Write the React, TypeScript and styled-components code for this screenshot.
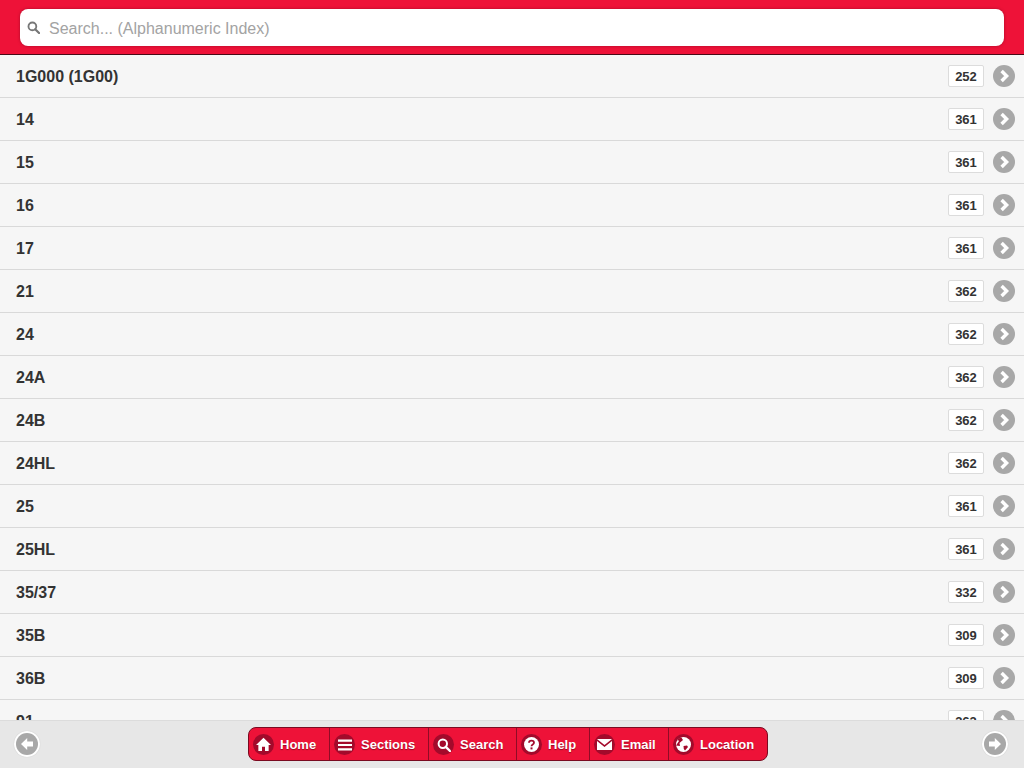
import styled, { createGlobalStyle } from 'styled-components';

const GlobalStyle = createGlobalStyle`
  html, body {
    margin: 0;
    height: 100%;
    overflow: hidden;
    font-family: "Liberation Sans", Arial, sans-serif;
  }
  #root {
    height: 100%;
  }
`;

const Page = styled.div`
  display: flex;
  flex-direction: column;
  height: 768px;
  background: #f6f6f6;
`;

const Header = styled.header`
  flex: none;
  box-sizing: border-box;
  height: 55px;
  padding: 9px 20px 8px;
  background: #ee1238;
  border-bottom: 1px solid #4a0a16;
`;

const SearchBox = styled.label`
  display: flex;
  align-items: center;
  gap: 9px;
  box-sizing: border-box;
  height: 37px;
  padding: 0 7px;
  background: #fff;
  border-radius: 8px;
  box-shadow: 0 0 3px rgba(120, 0, 30, 0.6);
`;

const SearchInput = styled.input`
  flex: 1;
  border: 0;
  outline: 0;
  padding: 2px 0 0;
  background: transparent;
  font: 16px "Liberation Sans", Arial, sans-serif;
  color: #333;

  &::placeholder {
    color: #a3a3a3;
    opacity: 1;
  }
`;

const List = styled.ul`
  flex: 1;
  min-height: 0;
  margin: 0;
  padding: 0;
  overflow: hidden;
  list-style: none;
`;

const Row = styled.li`
  display: flex;
  align-items: center;
  box-sizing: border-box;
  height: 43px;
  padding: 0 9px 1px 16px;
  border-bottom: 1px solid #d9d9d9;
  background: #f6f6f6;
`;

const RowLabel = styled.span`
  flex: 1;
  margin-top: 2px;
  font-size: 16px;
  font-weight: 700;
  color: #333;
`;

const Count = styled.span`
  box-sizing: border-box;
  width: 36px;
  height: 22px;
  margin-right: 9px;
  border: 1px solid #dcdcdc;
  border-radius: 2px;
  background: #fff;
  font-size: 13px;
  font-weight: 700;
  line-height: 21px;
  text-align: center;
  color: #333;
`;

const Footer = styled.footer`
  flex: none;
  display: flex;
  align-items: center;
  justify-content: space-between;
  box-sizing: border-box;
  height: 48px;
  padding: 0 16px 1px 14px;
  background: #e7e7e7;
  border-top: 1px solid #dcdcdc;
`;

const RoundButton = styled.span`
  display: flex;
  width: 26px;
  height: 26px;
  border-radius: 50%;
  background: #fff;
  align-items: center;
  justify-content: center;
  box-shadow: 0 0 1px rgba(0, 0, 0, 0.2);
`;

const Navbar = styled.nav`
  display: flex;
  box-sizing: border-box;
  height: 34px;
  margin: -1px 0 0 -6px;
  border: 1px solid #7a0a20;
  border-radius: 8px;
  background: #ee1238;
  overflow: hidden;
`;

const NavItem = styled.a<{ $width: number }>`
  display: flex;
  align-items: center;
  gap: 6px;
  box-sizing: border-box;
  width: ${p => p.$width}px;
  padding: 2px 0 0 4px;
  color: #fff;
  font-size: 13px;
  font-weight: 700;
  text-shadow: 0 1px 1px rgba(90, 0, 20, 0.6);

  & + & {
    border-left: 1px solid #8f0c26;
  }
`;

const NavIcon = styled.span`
  display: flex;
  align-items: center;
  justify-content: center;
  width: 21px;
  height: 21px;
  border-radius: 50%;
  background: #a30a2b;
`;

const Chevron = () => (
  <svg width="22" height="22" viewBox="0 0 22 22">
    <circle cx="11" cy="11" r="11" fill="#a8a8a8" />
    <path d="M8.6 6 13.6 11l-5 5" fill="none" stroke="#fff" strokeWidth="3.4" />
  </svg>
);

const Arrow = ({ flip }: { flip?: boolean }) => (
  <svg width="22" height="22" viewBox="0 0 22 22" style={flip ? { transform: 'scaleX(-1)' } : undefined}>
    <circle cx="11" cy="11" r="11" fill="#a8a8a8" />
    <path d="M11.2 5 5 11l6.2 6v-3.6H17V8.6h-5.8z" fill="#fff" />
  </svg>
);

const HomeIcon = () => (
  <svg width="15" height="15" viewBox="0 0 14 14">
    <path d="M7 .8 0 7.4h2.2V13h3.4V9h2.8v4h3.4V7.4H14z" fill="#fff" />
  </svg>
);

const MenuIcon = () => (
  <svg width="14" height="14" viewBox="0 0 14 14">
    <path d="M0 1.5h14v2.2H0zM0 5.9h14v2.2H0zM0 10.3h14v2.2H0z" fill="#fff" />
  </svg>
);

const SearchIcon = ({ color = '#fff', size = 14 }: { color?: string; size?: number }) => (
  <svg width={size} height={size} viewBox="0 0 14 14">
    <circle cx="5.8" cy="5.8" r="4.2" fill="none" stroke={color} strokeWidth="2" />
    <path d="M8.8 8.8 13 13" stroke={color} strokeWidth="2.4" strokeLinecap="round" />
  </svg>
);

const HelpIcon = () => (
  <svg width="15" height="15" viewBox="0 0 15 15">
    <circle cx="7.5" cy="7.5" r="7.5" fill="#fff" />
    <path d="M5 5.8c0-3 5-3 5 0 0 1.8-2.5 1.7-2.5 3.4" fill="none" stroke="#a30a2b" strokeWidth="1.8" />
    <rect x="6.5" y="10.4" width="2" height="2" fill="#a30a2b" />
  </svg>
);

const MailIcon = () => (
  <svg width="15" height="15" viewBox="0 0 15 15">
    <path d="M0 2h15L7.5 8z" fill="#fff" />
    <path d="M0 4v9h15V4L7.5 10z" fill="#fff" />
  </svg>
);

const GlobeIcon = () => (
  <svg width="15" height="15" viewBox="0 0 15 15">
    <circle cx="7.5" cy="7.5" r="7.5" fill="#fff" />
    <path d="M0 8.5 3 4 1.5 2.5 5 0l2 3-3.5 3 .5 3zM7.5 9l3.5-.5 1 1.5-3 3.5-1.2-1.5z" fill="#a30a2b" />
  </svg>
);

const rows = [
  ['1G000 (1G00)', '252'],
  ['14', '361'],
  ['15', '361'],
  ['16', '361'],
  ['17', '361'],
  ['21', '362'],
  ['24', '362'],
  ['24A', '362'],
  ['24B', '362'],
  ['24HL', '362'],
  ['25', '361'],
  ['25HL', '361'],
  ['35/37', '332'],
  ['35B', '309'],
  ['36B', '309'],
  ['91', '362'],
];

const navItems = [
  { label: 'Home', width: 80, icon: <HomeIcon /> },
  { label: 'Sections', width: 99, icon: <MenuIcon /> },
  { label: 'Search', width: 88, icon: <SearchIcon /> },
  { label: 'Help', width: 73, icon: <HelpIcon /> },
  { label: 'Email', width: 79, icon: <MailIcon /> },
  { label: 'Location', width: 99, icon: <GlobeIcon /> },
];

export default function App() {
  return (
    <Page>
      <GlobalStyle />
      <Header>
        <SearchBox>
          <SearchIcon color="#777" size={13} />
          <SearchInput placeholder="Search... (Alphanumeric Index)" />
        </SearchBox>
      </Header>
      <List>
        {rows.map(([label, count]) => (
          <Row key={label}>
            <RowLabel>{label}</RowLabel>
            <Count>{count}</Count>
            <Chevron />
          </Row>
        ))}
      </List>
      <Footer>
        <RoundButton><Arrow /></RoundButton>
        <Navbar>
          {navItems.map(item => (
            <NavItem key={item.label} $width={item.width}>
              <NavIcon>{item.icon}</NavIcon>
              {item.label}
            </NavItem>
          ))}
        </Navbar>
        <RoundButton><Arrow flip /></RoundButton>
      </Footer>
    </Page>
  );
}
